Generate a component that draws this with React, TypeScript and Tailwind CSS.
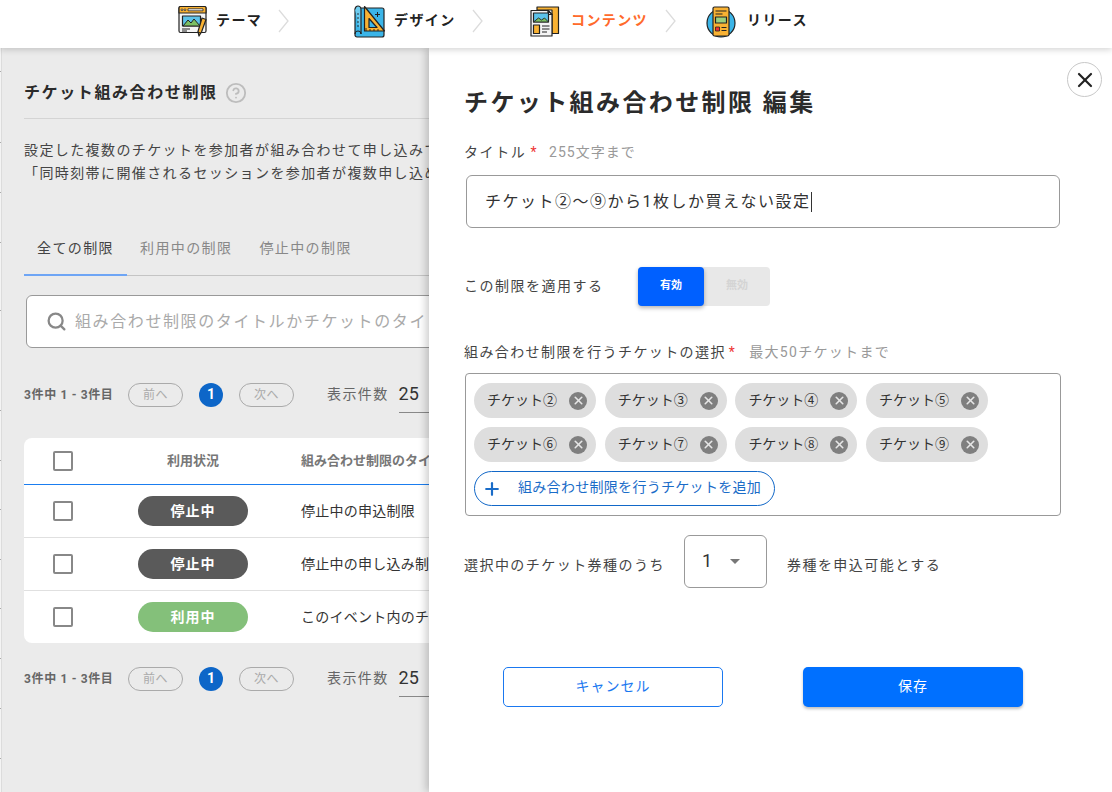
import React from "react";
import { X, Search, Plus, HelpCircle } from "lucide-react";

const font = "font-['Roboto','Noto_Sans_CJK_JP',sans-serif]";

// little ticks on the page's left edge, gap above each one
const tickGaps = [23, 70, 49, 49, 67, 99, 49, 48, 49, 48, 49, 49, 49];

const ThemeIcon = () => (
  <svg width="30" height="32" viewBox="0 0 30 32" fill="none" stroke="#222" strokeWidth="1.2" strokeLinejoin="round">
    <rect x="1" y="1.5" width="27" height="26" rx="1.5" fill="#f4f4f4" />
    <path d="M1 3a1.5 1.5 0 0 1 1.500-1.500h24A1.500 1.500 0 0 1 28 3v5H1z" fill="#f9b233" />
    <circle cx="4" cy="4.800" r="0.900" fill="#fff" strokeWidth="0.800" />
    <circle cx="7" cy="4.800" r="0.900" fill="#fff" strokeWidth="0.800" />
    <rect x="10" y="3.800" width="15" height="2" fill="#fff" strokeWidth="0.800" />
    <rect x="4.500" y="11" width="18" height="10" fill="#5cc3ea" />
    <path d="M5 21l5-6 3 3 3-4 6 7z" fill="#7cc063" strokeWidth="1" />
    <path d="M4 24h8M4 26h5" strokeWidth="1" />
    <path d="M24 13l4 1.500-4.500 12.500-2.500 4-1-4.500z" fill="#f9b233" />
    <path d="M19.500 27l3.500 1.200" />
  </svg>
);

const DesignIcon = () => (
  <svg width="32" height="33" viewBox="0 0 32 33" fill="none" stroke="#222" strokeWidth="1.2" strokeLinejoin="round">
    <rect x="1" y="3" width="29" height="29" rx="2" fill="#3bb5e8" />
    <path d="M1 4.500C1 2 3 1 4 1s3 1 3 3.500V29" fill="#6fcdf0" />
    <path d="M1 29c0-2 2-3 3-3s3 .9 3 3" />
    <path d="M3 9h2M3 13h2M3 17h2M3 21h2" strokeWidth="0.900" />
    <path d="M10.500 1.500L30.500 26H10.500z" fill="#f9b233" />
    <path d="M15 13.500L23 22.500H15z" fill="#3bb5e8" />
    <path d="M12 23v3M16 24v2M20 24v2M24 24v2" strokeWidth="0.900" />
    <path d="M23.500 7v5M21 9.500h5" strokeWidth="1" />
  </svg>
);

const ContentIcon = () => (
  <svg width="30" height="31" viewBox="0 0 30 31" fill="none" stroke="#222" strokeWidth="1.2" strokeLinejoin="round">
    <path d="M7 1h21.500v26.500H22V4H7z" fill="#f9b233" />
    <path d="M1 4.500h17l4 4V30H1z" fill="#f4f4f4" />
    <path d="M18 4.500v4h4z" fill="#fff" />
    <rect x="3.500" y="7" width="15" height="9" fill="#5cc3ea" />
    <path d="M3.500 16l5-4 3 2 3-2 4 4z" fill="#7cc063" strokeWidth="0.900" />
    <rect x="3.500" y="19" width="6" height="8.500" fill="#f9b233" />
    <path d="M12 20h7.500M12 23h7.500M12 26h5" strokeWidth="1" />
  </svg>
);

const ReleaseIcon = () => (
  <svg width="30" height="33" viewBox="0 0 30 33" fill="none" stroke="#222" strokeWidth="1.200" strokeLinejoin="round">
    <circle cx="15" cy="18" r="14" fill="#3bb5e8" />
    <rect x="7" y="2" width="16" height="29" rx="1.500" fill="#f9b233" />
    <path d="M9.500 6h11M9.500 9h7" strokeWidth="1" />
    <rect x="9.500" y="12" width="11" height="6" fill="#9ccf7c" />
    <rect x="9.500" y="22" width="4" height="4" fill="#e33" strokeWidth="0.800" />
    <path d="M15.500 22.500h5M15.500 25.500h5" strokeWidth="1" />
  </svg>
);

const Chevron = () => (
  <svg width="11" height="24" viewBox="0 0 11 24" fill="none" stroke="#dcdcdc" strokeWidth="1.300">
    <path d="M1 1l9 11-9 11" />
  </svg>
);

const Step = ({ icon, label, active, w }: { icon: React.ReactNode; label: string; active?: boolean; w: string }) => (
  <div className={`flex items-center gap-[8px] ${w}`}>
    {icon}
    <span className={`text-[14px] font-bold tracking-[0.1em] -mt-[2px] ${active ? "text-[#ff6a2b]" : "text-[#222]"}`}>{label}</span>
  </div>
);

const Pager = ({ className }: { className: string }) => (
  <div className={`flex items-center ${className}`}>
    <span className="text-[12px] font-bold text-[#666] w-[104px] tracking-[0.65px]">3件中 1 - 3件目</span>
    <span className="w-[55px] h-[24px] rounded-full border border-[#aaa] text-[12px] tracking-[0.5px] text-[#aaa] flex items-center justify-center">前へ</span>
    <span className="w-[24px] h-[24px] rounded-full bg-[#0d66c8] text-white text-[14px] font-bold flex items-center justify-center ml-[16px]">1</span>
    <span className="w-[55px] h-[24px] rounded-full border border-[#aaa] text-[12px] tracking-[0.5px] text-[#aaa] flex items-center justify-center ml-[16px]">次へ</span>
    <span className="text-[14px] tracking-[0.1em] text-[#666] ml-[33px] -mt-[1px]">表示件数</span>
    <span className="text-[18px] leading-[22px] text-[#333] ml-[10px] w-[40px] h-[37px] border-b border-[#888] pt-[7px]">25</span>
  </div>
);

const Row = ({ status, title, last }: { status: string; title: string; last?: boolean }) => (
  <div className={`flex items-center ${last ? "h-[52px]" : "h-[53px] border-b border-[#e0e0e0]"}`}>
    <span className="w-[20px] h-[20px] ml-[29px] rounded-[2px] border-2 border-[#888] bg-white" />
    <div className="w-[110px] ml-[65px]">
      <span className={`h-[30px] rounded-full flex items-center justify-center text-white text-[14px] font-bold tracking-[1px] ${status === "利用中" ? "bg-[#84c07a]" : "bg-[#5a5a5a]"}`}>{status}</span>
    </div>
    <span className="ml-[53px] text-[14px] text-[#333] whitespace-nowrap tracking-[0.25px]">{title}</span>
  </div>
);

const Chip = ({ label }: { label: string }) => (
  <span className="w-[122px] h-[35px] rounded-full bg-[#dedede] flex items-center pl-[13px] pr-[9px] justify-between text-[14px] text-[#333]">
    <span className="whitespace-nowrap">{label}</span>
    <span className="w-[18px] h-[18px] rounded-full bg-[#7f7f7f] flex items-center justify-center">
      <X size={13} strokeWidth={3} color="#e6e6e6" />
    </span>
  </span>
);

const App = () => {
  return (
    <div className={`w-[1112px] h-[792px] overflow-hidden flex flex-col bg-white ${font}`}>
      <header className="h-[48px] shrink-0 bg-white flex items-center pl-[178px] pb-[6px] relative z-20 shadow-[0_2px_6px_rgba(0,0,0,0.16)]">
        <Step icon={<ThemeIcon />} label="テーマ" w="w-[100px]" />
        <Chevron />
        <div className="w-[65px]" />
        <Step icon={<DesignIcon />} label="デザイン" w="w-[118px]" />
        <Chevron />
        <div className="w-[47px]" />
        <Step icon={<ContentIcon />} label="コンテンツ" active w="w-[135px] gap-[11px]" />
        <Chevron />
        <div className="w-[30px]" />
        <Step icon={<ReleaseIcon />} label="リリース" w="w-[110px] gap-[11px]" />
      </header>

      <div className="flex-1 flex min-h-0">
        <div className="w-px shrink-0 bg-[#f4f4f4]">
          {tickGaps.map((gap, i) => (
            <div key={i} className="h-px bg-[#aaa]" style={{ marginTop: gap }} />
          ))}
        </div>
        <main className="w-[428px] shrink-0 bg-[#ebebeb] overflow-hidden pl-[22px] border-l border-[#dcdcdc]">
          <div className="w-[600px]">
            <div className="h-[71px] w-[410px] flex items-center border-b border-[#d4d4d4] pt-[19px]">
              <h2 className="text-[16px] font-bold tracking-[0.1em] text-[#2b2b2b]">チケット組み合わせ制限</h2>
              <HelpCircle size={22} color="#bdbdbd" strokeWidth={2} className="ml-[7px]" />
            </div>
            <p className="mt-[20px] text-[14px] leading-[23px] tracking-[0.1em] text-[#444] whitespace-nowrap">設定した複数のチケットを参加者が組み合わせて申し込みできないように設定できます。</p>
            <p className="text-[14px] leading-[23px] tracking-[0.1em] text-[#444] whitespace-nowrap">「同時刻帯に開催されるセッションを参加者が複数申し込めないようにする」</p>
            <div className="mt-[41px] w-[406px] h-[50px] flex items-start border-b border-[#c4c4c4] text-[14px] tracking-[0.1em]">
              <span className="w-[103px] h-[50px] flex justify-center pt-[12px] text-[#444] border-b-2 border-[#6ea5f5]">全ての制限</span>
              <span className="ml-[13px] pt-[12px] text-[#888]">利用中の制限</span>
              <span className="ml-[27px] pt-[12px] text-[#888]">停止中の制限</span>
            </div>
            <div className="mt-[19px] ml-[2px] h-[53px] w-[500px] bg-white rounded-[6px] border border-[#999] flex items-center pl-[19px]">
              <Search size={21} color="#888" strokeWidth={2.6} />
              <span className="ml-[8px] text-[16px] tracking-[0.1em] text-[#aaa] whitespace-nowrap">組み合わせ制限のタイトルかチケットのタイトルで検索</span>
            </div>
            <Pager className="mt-[28px]" />
            <div className="mt-[25px] w-[500px] bg-white rounded-[8px] overflow-hidden">
              <div className="flex items-center h-[46px]">
                <span className="w-[20px] h-[20px] ml-[29px] rounded-[2px] border-2 border-[#888] bg-white" />
                <span className="w-[110px] ml-[65px] text-center text-[13px] font-bold text-[#777]">利用状況</span>
                <span className="ml-[53px] text-[13px] font-bold text-[#777] whitespace-nowrap">組み合わせ制限のタイトル</span>
              </div>
              <div className="h-px bg-[#1a7df0]" />
              <Row status="停止中" title="停止中の申込制限" />
              <Row status="停止中" title="停止中の申し込み制限" />
              <Row status="利用中" title="このイベント内のチケット制限" last />
            </div>
            <Pager className="mt-[17px]" />
          </div>
        </main>

        <aside className="flex-1 bg-white relative z-10 shadow-[-3px_0_8px_rgba(0,0,0,0.2)] pl-[35px] pt-[38px]">
          <button className="absolute right-[10px] top-[14px] w-[35px] h-[35px] rounded-full border border-[#c8c8c8] flex items-center justify-center">
            <X size={24} strokeWidth={2.2} color="#222" />
          </button>
          <h1 className="text-[24px] leading-[34px] font-bold text-[#2b2b2b] tracking-[2.4px]">チケット組み合わせ制限 編集</h1>
          <div className="mt-[22px] flex items-center h-[20px] text-[14px] text-[#444] tracking-[1.6px]">
            タイトル<span className="text-[#e33] ml-[4px]">*</span>
            <span className="ml-[11px] text-[14px] tracking-[1px] text-[#999]">255文字まで</span>
          </div>
          <div className="mt-[13px] ml-[2px] w-[594px] h-[53px] border border-[#999] rounded-[6px] flex items-center pl-[18px] text-[16px] tracking-[1.5px] text-[#333]">
            <span>チケット②〜⑨から1枚しか買えない設定</span>
            <span className="w-px h-[20px] bg-[#333]" />
          </div>
          <div className="mt-[39px] flex items-center h-[39px]">
            <span className="w-[174px] text-[14px] tracking-[1.5px] text-[#444]">この制限を適用する</span>
            <div className="flex bg-[#e8e8e8] rounded-[4px] h-[39px]">
              <span className="w-[66px] rounded-[4px] bg-[#0060ff] text-white text-[11px] font-bold flex items-center justify-center shadow-[0_2px_4px_rgba(0,0,0,0.3)]">有効</span>
              <span className="w-[66px] text-[#d4d4d4] text-[11px] font-bold flex items-center justify-center">無効</span>
            </div>
          </div>
          <div className="mt-[36px] flex items-center h-[20px] text-[14px] text-[#444] tracking-[1.4px]">
            組み合わせ制限を行うチケットの選択<span className="text-[#e33] ml-[3px]">*</span>
            <span className="ml-[13px] text-[14px] tracking-[1.3px] text-[#999]">最大50チケットまで</span>
          </div>
          <div className="mt-[11px] ml-[1px] w-[596px] h-[143px] border border-[#999] rounded-[4px] pl-[8px] pt-[9px]">
            <div className="flex flex-wrap gap-x-[8.7px] gap-y-[9px] w-[530px]">
              {["②", "③", "④", "⑤", "⑥", "⑦", "⑧", "⑨"].map((n) => (
                <Chip key={n} label={`チケット${n}`} />
              ))}
            </div>
            <div className="mt-[9px] w-[301px] h-[35px] rounded-full border border-[#1268c8] flex items-center pl-[7px] text-[#1a6cc8]">
              <Plus size={20} strokeWidth={2.6} />
              <span className="ml-[16px] -mt-[3px] text-[14px] tracking-[0.3px] whitespace-nowrap">組み合わせ制限を行うチケットを追加</span>
            </div>
          </div>
          <div className="mt-[19px] flex items-center h-[53px] text-[14px] text-[#444] tracking-[1.45px]">
            <span className="w-[220px] mt-[8px]">選択中のチケット券種のうち</span>
            <div className="w-[83px] h-[53px] border border-[#999] rounded-[6px] flex items-center pl-[17px] text-[18px] tracking-normal text-[#333] pb-[3px]">
              1
              <span className="ml-[18px] mt-[3px] w-0 h-0 border-x-[5px] border-x-transparent border-t-[5px] border-t-[#777]" />
            </div>
            <span className="ml-[20px] mt-[8px]">券種を申込可能とする</span>
          </div>
          <div className="mt-[79px] ml-[39px] flex gap-[80px] text-[14px] tracking-[1px]">
            <button className="w-[220px] h-[40px] rounded-[5px] border border-[#1a78f0] text-[#1a78f0] pb-[2px]">キャンセル</button>
            <button className="w-[220px] h-[40px] rounded-[5px] bg-[#0070ff] text-white pb-[2px] shadow-[0_2px_3px_rgba(0,0,0,0.25)]">保存</button>
          </div>
        </aside>
      </div>
    </div>
  );
};

export default App;
